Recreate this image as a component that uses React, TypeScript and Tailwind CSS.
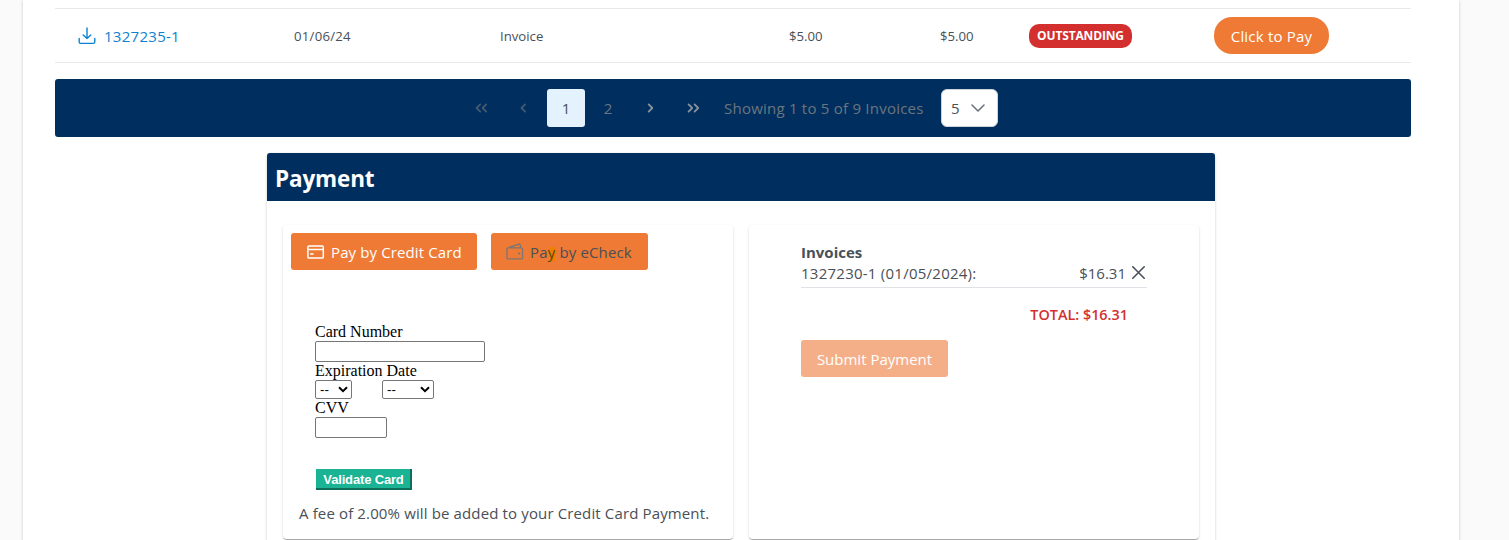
import type { ReactNode } from "react";

function DownloadIcon() {
  return (
    <svg className="-ml-px" width="18" height="18" viewBox="0 0 18 18" fill="none" stroke="currentColor" strokeWidth="1.4" strokeLinecap="round" strokeLinejoin="round">
      <path d="M9 1v10.5M5.2 8 9 11.6 12.8 8M1.2 11.5v3.2a1.7 1.7 0 0 0 1.7 1.7h12.2a1.7 1.7 0 0 0 1.7-1.7v-3.2" />
    </svg>
  );
}

function CardIcon() {
  return (
    <svg width="18" height="14" viewBox="0 0 18 14" fill="none" stroke="currentColor" strokeWidth="1.5" strokeLinejoin="round">
      <rect x="0.9" y="0.9" width="15.4" height="12.2" rx="1.2" />
      <path d="M1 4.5h15.6M3.2 9h3.4" />
    </svg>
  );
}

function WalletIcon() {
  return (
    <svg width="18" height="17" viewBox="0 0 18 17" fill="none" stroke="currentColor" strokeWidth="1.3" strokeLinejoin="round">
      <path d="M14.9 4.9H2.2C1.4 4.9 1 5.4 1 6.1v8.6c0 .8.4 1.2 1.2 1.2h13c.8 0 1.3-.4 1.3-1.2V6.1c0-.7-.5-1.2-1.6-1.2ZM2 4.8 13 1.1c.6-.2 1 .1 1.1.6l.5 3.2" />
      <rect x="12.1" y="9.4" width="2" height="2" rx="0.5" fill="currentColor" stroke="none" />
    </svg>
  );
}

function Angle({ d, w, className }: { d: string; w: number; className: string }) {
  return (
    <span className={`flex h-[38px] w-[38px] items-center justify-center ${className}`}>
      <svg width={w} height="10" viewBox={`0 0 ${w} 10`} fill="none" stroke="currentColor" strokeWidth="1.8" strokeLinecap="round" strokeLinejoin="round">
        <path d={d} />
      </svg>
    </span>
  );
}

function FakeSelect({ width }: { width: string }) {
  return (
    <div className={`flex h-[19px] items-center justify-between rounded-[2px] border border-[#767676] bg-white pl-1 pr-[3px] font-['Liberation_Sans'] text-[13.33px] leading-none text-black ${width}`}>
      <span>--</span>
      <svg width="10" height="7" viewBox="0 0 10 7" fill="none" stroke="currentColor" strokeWidth="2">
        <path d="M1 1.2 5 5.1 9 1.2" />
      </svg>
    </div>
  );
}

function Panel({ children, className }: { children: ReactNode; className: string }) {
  return (
    <section className={`h-[314px] w-[450px] rounded-[4px] bg-white shadow-[0_2px_1px_-1px_rgba(0,0,0,0.2),0_1px_1px_0_rgba(0,0,0,0.14),0_1px_3px_0_rgba(0,0,0,0.12)] ${className}`}>
      {children}
    </section>
  );
}

export default function App() {
  return (
    <div className="h-[540px] overflow-hidden bg-[#fafafa] px-[23px] font-['Open_Sans',sans-serif] text-[15px] text-[#495057]">
      <main className="h-[640px] w-[1436px] bg-white px-8 pt-2 shadow-[0_1px_3px_rgba(0,0,0,0.2)]">
        <div className="grid h-[55px] w-[1356px] grid-cols-[239px_206px_289px_151px_89px_185px_1fr] items-center border-y border-[#e9e9e9] text-[13.2px]">
          <a className="flex items-center gap-2 pl-6 text-[15px] text-[#0d83d0]">
            <DownloadIcon />
            <span className="pt-[2px] tracking-[0.28px]">1327235-1</span>
          </a>
          <span className="pt-[2px] tracking-[0.25px]">01/06/24</span>
          <span className="pt-[2px]">Invoice</span>
          <span className="pt-[2px]">$5.00</span>
          <span className="pt-[2px]">$5.00</span>
          <span className="flex h-6 w-[103px] items-center justify-center rounded-[10px] bg-[#d32f2f] pt-px text-[12px] font-bold tracking-[-0.15px] text-white">OUTSTANDING</span>
          <button className="flex h-[37px] w-[115px] items-center justify-center rounded-[18px] bg-[#ee7a35] pt-[2px] text-[15px] tracking-[0.2px] text-white">Click to Pay</button>
        </div>

        <nav className="mt-4 flex h-[58px] w-[1356px] items-center rounded-[3px] bg-[#002f5f] pl-[407px] text-[#6c757d]">
          <Angle w={13} d="M5.2 1.4 1.6 5l3.6 3.6M11.2 1.4 7.6 5l3.6 3.6" className="opacity-60" />
          <Angle w={7} d="M5.1 1.4 1.5 5l3.6 3.6" className="ml-1 opacity-60" />
          <span className="ml-[5px] flex h-[38px] w-[38px] items-center justify-center rounded-[3px] bg-[#e3f2fd] text-[#495057]">1</span>
          <span className="ml-1 flex h-[38px] w-[38px] items-center justify-center">2</span>
          <Angle w={7} d="m1.7 1.4 3.6 3.6-3.6 3.6" className="ml-[4px] brightness-125" />
          <Angle w={13} d="m1.6 1.4 3.6 3.6-3.6 3.6M7.6 1.4l3.6 3.6-3.6 3.6" className="ml-[5px] brightness-125" />
          <span className="ml-[12px] w-[217px] whitespace-nowrap tracking-[0.23px]">Showing 1 to 5 of 9 Invoices</span>
          <span className="flex h-[38px] w-[57px] items-center justify-between rounded-[6px] border border-[#ced4da] bg-white pl-[9px] pr-[12px] text-[#495057]">
            <span className="pt-px">5</span>
            <svg width="14" height="8" viewBox="0 0 14 8" fill="none" stroke="#6c757d" strokeWidth="1.6" strokeLinecap="round" strokeLinejoin="round">
              <path d="m1 1 6 6 6-6" />
            </svg>
          </span>
        </nav>

        <section className="ml-[212px] mt-4 h-[450px] w-[948px] rounded-[4px] bg-white shadow-[0_1px_3px_rgba(0,0,0,0.2)]">
          <h2 className="flex h-12 items-center rounded-t-[3px] bg-[#002f5f] pl-2 pt-[3px] text-[22.5px] font-bold tracking-[-0.15px] text-white">Payment</h2>
          <div className="flex gap-4 px-4 pt-6">
            <Panel className="px-2 pt-2">
              <div className="flex gap-[14px]">
                <button className="flex h-[37px] w-[186px] items-center gap-[6px] rounded-[3px] bg-[#ee7a35] pl-4 text-white">
                  <CardIcon />
                  <span className="whitespace-nowrap pt-px tracking-[0.12px]">Pay by Credit Card</span>
                </button>
                <button className="flex h-[37px] w-[157px] items-center gap-[6px] rounded-[3px] bg-[#ee7a35] pl-[15px]">
                  <span className="text-[#7b7673]"><WalletIcon /></span>
                  <span className="whitespace-nowrap pt-px tracking-[0.15px]">
                    Pa<span className="bg-linear-to-r from-transparent from-30% to-[#f07c00] to-30% bg-[length:100%_14px] bg-[position:0_5px] bg-no-repeat text-[#5c4a00]">y</span> by eCheck
                  </span>
                </button>
              </div>
              <form className="ml-6 mt-[53px] font-['Liberation_Serif',serif] text-[16px] leading-[18px] text-black">
                <div>Card Number</div>
                <div className="h-[21px] w-[170px] rounded-[2px] border border-[#767676]" />
                <div>Expiration Date</div>
                <div className="flex gap-[30px]">
                  <FakeSelect width="w-[37px]" />
                  <FakeSelect width="w-[52px]" />
                </div>
                <div>CVV</div>
                <div className="h-[21px] w-[72px] rounded-[2px] border border-[#767676]" />
                <div className="ml-px mt-[31px] flex h-[21px] w-[96px] items-center justify-center border-b-2 border-r-2 border-[#0e6d5a] bg-[#1ab394] pl-px pt-[2px] font-['Liberation_Sans'] text-[13px] font-bold leading-none tracking-[-0.16px] text-white">
                  Validate Card
                </div>
              </form>
              <p className="ml-2 mt-[12px] whitespace-nowrap leading-[22px] tracking-[0.135px]">A fee of 2.00% will be added to your Credit Card Payment.</p>
            </Panel>
            <Panel className="px-[52px] pt-[17px]">
              <div className="w-[346px] border-b border-[#dee2e6] pb-[3px] leading-[21px]">
                <div className="font-bold">Invoices</div>
                <div className="flex items-center">
                  <span className="flex-1 tracking-[0.25px]">1327230-1 (01/05/2024):</span>
                  <span>$16.31</span>
                  <svg className="mb-[2px] ml-[6px] mr-[2px]" width="13" height="13" viewBox="0 0 13 13" fill="none" stroke="currentColor" strokeWidth="1.6" strokeLinecap="round">
                    <path d="m.8.8 11.4 11.4M12.2.8.8 12.2" />
                  </svg>
                </div>
              </div>
              <div className="mt-4 w-[327px] text-right text-[14.4px] font-semibold leading-[21px] text-[#d32f2f]">TOTAL: $16.31</div>
              <button className="mt-[15px] flex h-[37px] w-[147px] items-center justify-center rounded-[3px] bg-[#f4af88] pt-[2px] text-white">Submit Payment</button>
            </Panel>
          </div>
        </section>
      </main>
    </div>
  );
}
